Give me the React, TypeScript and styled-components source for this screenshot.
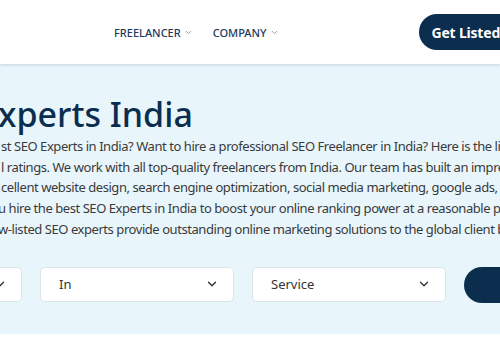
import React from "react";
import styled, { createGlobalStyle } from "styled-components";

const Global = createGlobalStyle`
  html, body {
    margin: 0;
    padding: 0;
    overflow: hidden;
    background: #ffffff;
    font-family: "Noto Sans", "Open Sans", sans-serif;
  }
`;

const Chevron = ({ size = 12, color = "#333" }: { size?: number; color?: string }) => (
  <svg width={size} height={size} viewBox="0 0 24 24" fill="none" stroke={color} strokeWidth={2.4} strokeLinecap="round" strokeLinejoin="round">
    <polyline points="6 9 12 15 18 9" />
  </svg>
);

const S = {
  Page: styled.div`
    width: 500px;
    overflow: hidden;
  `,
  Header: styled.header`
    height: 64px;
    display: flex;
    align-items: center;
    padding-left: 114px;
    background: #fff;
    box-shadow: 0 1px 3px rgba(40, 60, 80, 0.18);
    position: relative;
    z-index: 1;
    white-space: nowrap;
  `,
  Nav: styled.nav`
    display: flex;
    align-items: center;
    gap: 20px;
  `,
  NavItem: styled.span`
    display: flex;
    align-items: center;
    gap: 3px;
    font-size: 11px;
    font-weight: 500;
    color: #1d3a5c;
  `,
  GetListed: styled.button`
    margin-left: 140px;
    flex: 0 0 auto;
    height: 36px;
    padding: 0 18px 0 13px;
    border: none;
    border-radius: 18px;
    background: #0b2e4f;
    color: #fff;
    font-family: inherit;
    font-size: 14px;
    font-weight: 700;
    letter-spacing: -0.2px;
  `,
  Hero: styled.section`
    background: #e8f6fc;
    padding: 29px 0 31px;
    white-space: nowrap;
  `,
  Title: styled.h1`
    margin: 0 0 0 -21px;
    font-size: 34px;
    line-height: 43px;
    font-weight: 500;
    color: #0b2e4f;
  `,
  Text: styled.div`
    font-size: 13px;
    letter-spacing: -0.44px;
    line-height: 20.7px;
    color: #3a3a3a;
  `,
  Line: styled.div<{ $shift?: number }>`
    margin-left: ${(p) => p.$shift ?? 0}px;
  `,
  Filters: styled.div`
    display: flex;
    gap: 18px;
    margin: 27px 0 0 -172px;
  `,
  Select: styled.div`
    flex: 0 0 194px;
    height: 35px;
    box-sizing: border-box;
    display: flex;
    align-items: center;
    justify-content: space-between;
    padding: 0 14px 0 18px;
    background: #fff;
    border: 1px solid #dde4ea;
    border-radius: 5px;
    font-size: 13px;
    color: #333;
  `,
  Search: styled.button`
    flex: 0 0 150px;
    height: 36px;
    border: none;
    border-radius: 18px;
    background: #0b2e4f;
  `,
};

const lines = [
  "st SEO Experts in India? Want to hire a professional SEO Freelancer in India? Here is the list",
  "l ratings. We work with all top-quality freelancers from India. Our team has built an impressive",
  "cellent website design, search engine optimization, social media marketing, google ads, and",
  "u hire the best SEO Experts in India to boost your online ranking power at a reasonable price.",
  "w-listed SEO experts provide outstanding online marketing solutions to the global client base.",
];

const App = () => {
  return (
    <S.Page>
      <Global />
      <S.Header>
        <S.Nav>
          <S.NavItem>
            FREELANCER <Chevron size={9} color="#8a96a3" />
          </S.NavItem>
          <S.NavItem>
            COMPANY <Chevron size={9} color="#8a96a3" />
          </S.NavItem>
        </S.Nav>
        <S.GetListed>Get Listed</S.GetListed>
      </S.Header>
      <S.Hero>
        <S.Title>Experts India</S.Title>
        <S.Text>
          {lines.map((l, i) => (
            <S.Line key={i} $shift={i === 3 || i === 4 ? -2 : 1}>
              {l}
            </S.Line>
          ))}
        </S.Text>
        <S.Filters>
          <S.Select>
            <span>Country</span>
            <Chevron size={14} />
          </S.Select>
          <S.Select>
            <span>In</span>
            <Chevron size={14} />
          </S.Select>
          <S.Select>
            <span>Service</span>
            <Chevron size={14} />
          </S.Select>
          <S.Search aria-label="Search" />
        </S.Filters>
      </S.Hero>
    </S.Page>
  );
};

export default App;
